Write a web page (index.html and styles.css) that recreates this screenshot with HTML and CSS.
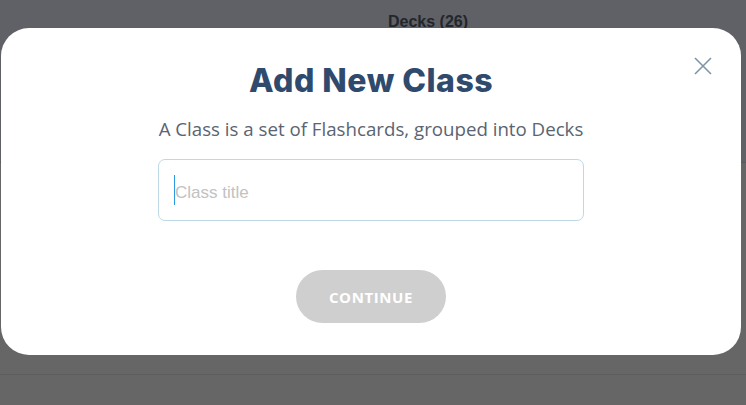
FILE: index.html
```html
<!DOCTYPE html>
<html>
<head>
<meta charset="utf-8">
<link rel="stylesheet" href="styles.css">
</head>
<body>
<div class="page">
  <div class="topbar"><span class="decks">Decks (26)</span></div>
  <div class="content"></div>
  <div class="footer"></div>
</div>
<div class="modal">
  <button class="close" aria-label="Close">
    <svg width="20" height="20" viewBox="0 0 20 20"><path d="M2 2 L18 18 M18 2 L2 18" stroke="#7e94a7" stroke-width="1.6" fill="none"/></svg>
  </button>
  <h1 class="title">Add New Class</h1>
  <p class="subtitle">A Class is a set of Flashcards, grouped into Decks</p>
  <div class="field"><span class="caret"></span><span class="placeholder">Class title</span></div>
  <button class="continue">CONTINUE</button>
</div>
</body>
</html>
```
FILE: styles.css
```css
html, body { margin: 0; padding: 0; }
body { width: 746px; height: 405px; overflow: hidden; background: #666666; font-family: "Open Sans", sans-serif; }
.page { display: flex; flex-direction: column; height: 405px; }
.topbar { height: 162px; background: #5f6166; border-bottom: 1px solid #585a5e; display: flex; justify-content: flex-start; }
.decks { margin: 13px 0 0 388px; font-family: "Liberation Sans", sans-serif; font-weight: 700; font-size: 16px; color: #23262b; }
.content { height: 211px; background: #666666; border-bottom: 1px solid #5d5d5d; }
.footer { flex: 1; background: #666666; }
.modal { position: absolute; left: 1px; top: 28px; width: 740px; height: 327px; background: #ffffff; border-radius: 28px; display: flex; flex-direction: column; align-items: center; box-sizing: border-box; padding-top: 34px; }
.close { position: absolute; right: 28px; top: 28px; width: 20px; height: 20px; padding: 0; border: 0; background: none; display: flex; }
.title { margin: 0; font-family: "Inter", sans-serif; font-weight: 800; font-size: 32px; line-height: 38px; color: #2f4a6d; letter-spacing: 0.5px; }
.subtitle { margin: 16px 0 0; font-size: 18.7px; line-height: 26px; color: #5a6472; }
.field { margin-top: 17px; width: 426px; height: 62px; box-sizing: border-box; border: 1px solid #bdd9e5; border-radius: 7px; display: flex; align-items: center; padding-left: 15px; }
.caret { width: 1px; height: 30px; background: #2b9be0; }
.placeholder { margin-top: 5px; font-family: "Liberation Sans", sans-serif; font-size: 17px; color: #c2c2c2; }
.continue { margin-top: 49px; width: 150px; height: 53px; border: 0; border-radius: 27px; background: #cfcfcf; color: #ffffff; font-family: "Open Sans", sans-serif; font-weight: 700; font-size: 15px; letter-spacing: 0.6px; }
```
